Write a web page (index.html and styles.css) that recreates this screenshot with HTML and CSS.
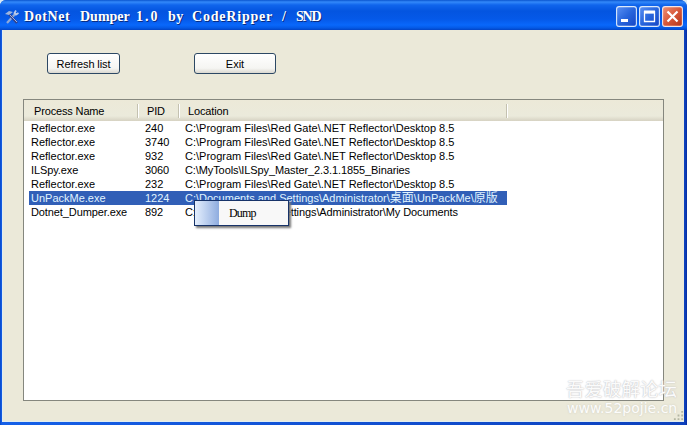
FILE: index.html
```
<!DOCTYPE html>
<html lang="en">
<head>
<meta charset="utf-8">
<title>DotNet Dumper</title>
<link rel="stylesheet" href="styles.css">
</head>
<body>
<main class="window">
  <header class="titlebar">
    <svg class="appicon" viewBox="0 0 16 16"><path d="M3 14 12 4" stroke="#8fa9d9" stroke-width="2.2"/><path d="M12 1.5 10.5 4 12 5.5 14.5 4" stroke="#b8c9e9" stroke-width="1.8" fill="none"/><path d="m5 5 8 9" stroke="#35428a" stroke-width="2.4"/><path d="m1 5 4-3 4 1-4 3Z" fill="#9fb5dd"/><path d="m6 6 7 7" stroke="#a3b5df"/></svg>
    <h1 class="title"><span class="w6 a">DotNet</span> <span class="w6 b">Dumper</span> <span class="w3 c">1.0</span> <span class="w2 d">by</span> <span class="w10 e">CodeRipper</span> <span class="w1 f">/</span> <span class="w3 g">SND</span></h1>
    <div class="controls">
      <svg viewBox="0 0 21 21"><defs><linearGradient id="blue" x2="1" y2="1"><stop stop-color="#5b91f5"/><stop offset=".5" stop-color="#2865dc"/><stop offset="1" stop-color="#1645c5"/></linearGradient><linearGradient id="red" x2="1" y2="1"><stop stop-color="#ee9175"/><stop offset=".5" stop-color="#d7583a"/><stop offset="1" stop-color="#b23419"/></linearGradient></defs><rect x=".6" y=".6" width="19.8" height="19.8" rx="2.5" fill="url(#blue)" stroke="#dce9fb" stroke-width="1.1"/><path d="M5 14.5h7" stroke="#fff" stroke-width="3"/></svg>
      <svg viewBox="0 0 21 21"><rect x=".6" y=".6" width="19.8" height="19.8" rx="2.5" fill="url(#blue)" stroke="#dce9fb" stroke-width="1.1"/><path d="M5.5 5v10.5h10V5M5 6.5h11" stroke="#fff" stroke-width="1.3" fill="none"/><path d="M5 6h11" stroke="#fff" stroke-width="3"/></svg>
      <svg viewBox="0 0 21 21"><rect x=".6" y=".6" width="19.8" height="19.8" rx="2.5" fill="url(#red)" stroke="#f3e4e6" stroke-width="1.1"/><path d="m5.5 5.5 10 10m0-10-10 10" stroke="#fff" stroke-width="2.2"/></svg>
    </div>
  </header>
  <section class="client">
    <div class="actions"><button class="refresh">Refresh list</button><button class="exit">Exit</button></div>
    <div class="list">
      <div class="row head"><span>Process Name</span><span>PID</span><span>Location</span></div>
      <div class="row"><span>Reflector.exe</span><span>240</span><span>C:\Program Files\Red Gate\.NET Reflector\Desktop 8.5</span></div>
      <div class="row"><span>Reflector.exe</span><span>3740</span><span>C:\Program Files\Red Gate\.NET Reflector\Desktop 8.5</span></div>
      <div class="row"><span>Reflector.exe</span><span>932</span><span>C:\Program Files\Red Gate\.NET Reflector\Desktop 8.5</span></div>
      <div class="row tight"><span>ILSpy.exe</span><span>3060</span><span>C:\MyTools\ILSpy_Master_2.3.1.1855_Binaries</span></div>
      <div class="row"><span>Reflector.exe</span><span>232</span><span>C:\Program Files\Red Gate\.NET Reflector\Desktop 8.5</span></div>
      <div class="row selected"><span>UnPackMe.exe</span><span>1224</span><span>C:\Documents and Settings\Administrator\<b>桌面</b>\UnPackMe\<b>原版</b></span></div>
      <div class="row tight"><span>Dotnet_Dumper.exe</span><span>892</span><span>C:\Documents and Settings\Administrator\My Documents</span></div>
    </div>
  </section>
  <div class="menu"><span>Dump</span></div>
  <svg class="grip" viewBox="0 0 12 12"><path d="M9 1h2v2H9zM5 5h2v2H5zM9 5h2v2H9zM1 9h2v2H1zM5 9h2v2H5zM9 9h2v2H9z" fill="#b4b6a3"/></svg>
  <div class="watermark"><span class="forum">吾爱破解论坛</span><span class="site">www.52pojie.cn</span></div>
</main>
</body>
</html>
```
FILE: styles.css
```
* { box-sizing: border-box; }
body { margin: 0; overflow: hidden; background: #d9e9f5; }
.window {
  position: relative;
  display: flex;
  flex-direction: column;
  width: 687px;
  height: 425px;
  padding: 0 3px 3px 2px;
  background: linear-gradient(90deg, #0848c9, #1560e8 2px, #0d41bd 685px, #062ba0);
  border-radius: 6px 7px 0 0;
  overflow: hidden;
  font: 11px/14px "Liberation Sans", "Noto Sans CJK SC", sans-serif;
  color: #000;
}
.titlebar {
  flex: none;
  display: flex;
  align-items: center;
  height: 30px;
  margin: 0 -3px 0 -2px;
  padding: 3px 4px 0 4px;
  background: linear-gradient(#0a55cf, #3389fa 2px, #1065ec 5px, #0455e0 11px, #0559e8 19px, #0968fb 25px, #0459e5 28px, #0343c4);
}
.appicon { width: 16px; height: 16px; }
.title {
  display: flex;
  gap: 8px;
  margin: 0 0 0 4px;
  font: bold 14px/16px "Liberation Serif", serif;
  color: #fff;
  text-shadow: 1px 1px #0a2c80;
  white-space: nowrap;
}
.title span { flex: none; }
.w1 { width: 8px; text-align: center; }
.w2 { width: 16px; }
.w3 { width: 24px; }
.w6 { width: 48px; }
.w10 { width: 80px; }
.a { letter-spacing: .6px; }
.b { letter-spacing: 0; }
.c { letter-spacing: 2px; }
.d { letter-spacing: .5px; }
.e { letter-spacing: .8px; }
.g { letter-spacing: -1.2px; }
.controls { display: flex; gap: 2px; margin-left: auto; }
.controls svg { width: 21px; height: 21px; }
.client {
  flex: 1;
  padding: 23px 20px 0 21px;
  background: #ebe9d9;
  box-shadow: inset 1px -1px #e1edf0;
}
.actions { display: flex; gap: 74px; padding-left: 24px; }
button {
  height: 21px;
  padding: 0;
  border: 1px solid #2c4864;
  border-radius: 3px;
  background: linear-gradient(#fff, #f5f5f2 75%, #dad8d0);
  font: inherit;
  color: #000;
}
.refresh { width: 73px; letter-spacing: -.1px; }
.exit { width: 82px; }
.list {
  width: 641px;
  height: 302px;
  margin-top: 25px;
  border: 1px solid #85877e;
  background: #fff;
}
.row {
  display: grid;
  grid-template-columns: 114px 40px 323px;
  width: 478px;
  height: 14px;
  margin-left: 5px;
  white-space: nowrap;
}
.row span { height: 14px; padding-left: 2px; line-height: 15px; }
.tight { letter-spacing: -.1px; }
.row.head {
  grid-template-columns: 113px 41px 328px 1fr;
  width: auto;
  height: 21px;
  margin: 0;
  padding: 4px 0 3px 1px;
  background: linear-gradient(#ece9d8, #ebeadb 16px, #d6d2c2);
  letter-spacing: -.15px;
}
.head span { padding-left: 9px; line-height: 14px; border-right: 1px solid #c4c1b0; box-shadow: 1px 0 #fff; }
.selected { background: #315fb7; color: #e0f4ff; }
.row b { font-size: 12px; font-weight: normal; line-height: 12px; }
.menu {
  position: absolute;
  left: 194px;
  top: 200px;
  width: 95px;
  height: 26px;
  padding: 5px 0 0 34px;
  border: 1px solid #173369;
  background: linear-gradient(90deg, #e5effd, #8eacdf 24px, #f8f8f8 24px);
  box-shadow: 2px 2px 2px #777;
  font: 12px/14px "Liberation Serif", serif;
}
.menu span { letter-spacing: -.8px; }
.grip { position: absolute; right: 3px; bottom: 4px; width: 11px; height: 11px; }
.watermark {
  position: absolute;
  left: 566px;
  top: 378px;
  display: flex;
  flex-direction: column;
  color: #fffffff0;
  text-shadow: 0 0 2px #aaa9a577;
  white-space: nowrap;
}
.forum { font: 18.5px/20px "Noto Sans CJK SC", sans-serif; text-shadow: 0 0 1px #c5c5c8, 0 0 2px #c8c8cb; }
.site { margin-top: 1px; padding-left: 1px; font: 14px/18px "DejaVu Sans", sans-serif; }
```
